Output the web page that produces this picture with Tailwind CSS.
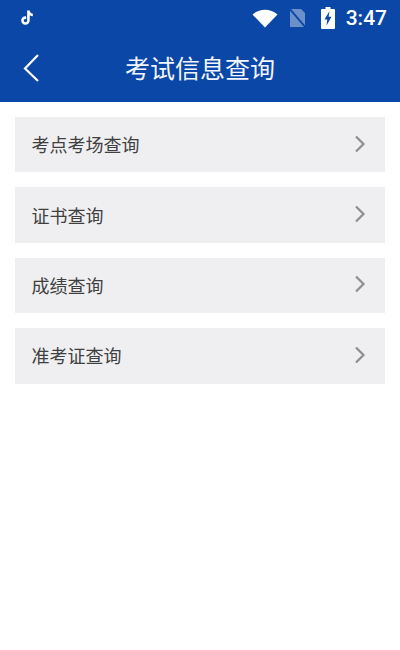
<!DOCTYPE html>
<html lang="zh-CN">
<head>
<meta charset="utf-8">
<script src="https://cdn.jsdelivr.net/npm/@tailwindcss/browser@4"></script>
</head>
<body class="bg-white font-['Noto_Sans_CJK_SC','Noto_Sans',sans-serif]">
<div class="w-[400px] h-[650px] overflow-hidden bg-white flex flex-col">
  <header class="h-[102px] bg-[#0a47a6] text-white flex flex-col shrink-0">
    <div class="h-[36px] flex items-center pl-[20px] pr-[13px]">
      <svg class="w-[14px] h-[16px]" viewBox="2 1 11 13.500"><path d="M7.600 1.500h2.200c.1 1.500 1 2.500 2.600 2.600v2.100c-1 0-1.900-.3-2.600-.8v4.300c0 2.200-1.600 3.800-3.600 3.800-2.100 0-3.600-1.600-3.600-3.600 0-2.200 1.800-3.800 4.200-3.500v2.300c-1.100-.3-2 .3-2 1.200 0 .8.600 1.400 1.400 1.400.8 0 1.400-.6 1.400-1.500z" fill="#fff"/></svg>
      <div class="ml-auto flex items-center">
        <svg class="w-[26px] h-[20px]" viewBox="0 0 26 20"><path d="M0.500 6.500C4 3.400 8.300 1.700 13 1.700S22 3.400 25.500 6.500L13 19.500z" fill="#fff"/></svg>
        <svg class="ml-[11px] w-[17px] h-[20px]" viewBox="0 0 17 20"><path d="M1 1h11l4 4v14H1z" fill="#fff" fill-opacity=".4"/><path d="M0 0 17 20" stroke="#0a47a6" stroke-width="1.800"/></svg>
        <svg class="ml-[15px] w-[14px] h-[22px]" viewBox="0 0 14 22"><path d="M4.500 0h5v2H13a1 1 0 0 1 1 1v18a1 1 0 0 1-1 1H1a1 1 0 0 1-1-1V3a1 1 0 0 1 1-1h3.500z" fill="#fff"/><path d="M8.500 4 3.500 12.500H6.300L5.500 18.500 10.500 9.800H7.600z" fill="#0a47a6"/></svg>
        <span class="ml-[11px] text-[21px] leading-none font-medium font-['Roboto',sans-serif]">3:47</span>
      </div>
    </div>
    <div class="relative h-[62px] flex items-center justify-center">
      <svg class="absolute left-[22px] top-[16px] w-[18px] h-[30px]" viewBox="0 0 18 30" fill="none"><path d="M16 3 3 16.500 16 29" stroke="#fff" stroke-width="2.200"/></svg>
      <h1 class="text-[25px] leading-none text-[#f2f6fc] font-normal">考试信息查询</h1>
    </div>
  </header>
  <main class="px-[15px] pt-[15px] flex flex-col gap-[15px]">
    <a class="h-[55.4px] bg-[#efeff1] flex items-center justify-between pl-[16.500px] pr-[19px] text-[18px] text-[#404040]"><span>考点考场查询</span><svg class="w-[12px] h-[20px] -mt-[2px]" viewBox="0 0 12 20" fill="none"><path d="M2 2.500 9.500 10 2 17.500" stroke="#8e8e8e" stroke-width="2.200"/></svg></a>
    <a class="h-[55.4px] bg-[#efeff1] flex items-center justify-between pl-[16.500px] pr-[19px] text-[18px] text-[#404040]"><span>证书查询</span><svg class="w-[12px] h-[20px] -mt-[2px]" viewBox="0 0 12 20" fill="none"><path d="M2 2.500 9.500 10 2 17.500" stroke="#8e8e8e" stroke-width="2.200"/></svg></a>
    <a class="h-[55.4px] bg-[#efeff1] flex items-center justify-between pl-[16.500px] pr-[19px] text-[18px] text-[#404040]"><span>成绩查询</span><svg class="w-[12px] h-[20px] -mt-[2px]" viewBox="0 0 12 20" fill="none"><path d="M2 2.500 9.500 10 2 17.500" stroke="#8e8e8e" stroke-width="2.200"/></svg></a>
    <a class="h-[55.4px] bg-[#efeff1] flex items-center justify-between pl-[16.500px] pr-[19px] text-[18px] text-[#404040]"><span>准考证查询</span><svg class="w-[12px] h-[20px] -mt-[2px]" viewBox="0 0 12 20" fill="none"><path d="M2 2.500 9.500 10 2 17.500" stroke="#8e8e8e" stroke-width="2.200"/></svg></a>
  </main>
</div>
</body>
</html>
